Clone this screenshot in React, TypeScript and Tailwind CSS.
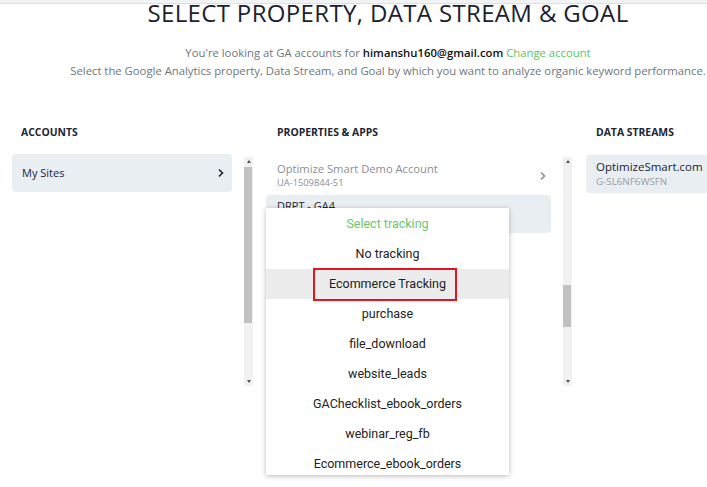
import React from "react";

const head = { fontFamily: '"Open Sans", "Liberation Sans", sans-serif' };
const rob = { fontFamily: 'Roboto, "Liberation Sans", sans-serif' };

function Chevron() {
  return (
    <svg width="8" height="10" viewBox="0 0 8 10" fill="none">
      <path d="M2 1.5 L5.5 5 L2 8.5" stroke="currentColor" strokeWidth="1.6" />
    </svg>
  );
}

function Scrollbar({ thumbTop, thumbH }: { thumbTop: number; thumbH: number }) {
  return (
    <div className="relative w-[9px] h-[229px] bg-[#f1f1f1] flex flex-col items-center">
      <div className="h-[9px] flex items-center justify-center">
        <div className="w-0 h-0 border-x-[2.5px] border-x-transparent border-b-[3px] border-b-[#505050]" />
      </div>
      <div className="absolute left-0 w-[8px] bg-[#c1c1c1]" style={{ top: thumbTop, height: thumbH }} />
      <div className="mt-auto h-[9px] flex items-center justify-center">
        <div className="w-0 h-0 border-x-[2.5px] border-x-transparent border-t-[3px] border-t-[#505050]" />
      </div>
    </div>
  );
}

const items = [
  "No tracking",
  "Ecommerce Tracking",
  "purchase",
  "file_download",
  "website_leads",
  "GAChecklist_ebook_orders",
  "webinar_reg_fb",
  "Ecommerce_ebook_orders",
];

export default function App() {
  return (
    <div className="w-[707px] h-[487px] overflow-hidden bg-white relative text-[#1c2533]" style={head}>
      <div className="h-[4px] bg-[#f2f3f5] border-b border-[#dcdfe3]" />
      <div className="w-[776px]">
        <h1 className="text-center text-[24px] leading-[22px] -mt-[2px] font-medium tracking-[0.35px] text-[#1a2230]">
          SELECT PROPERTY, DATA STREAM &amp; GOAL
        </h1>
        <p className="text-center text-[11.3px] text-[#6f767e] mt-[20px] leading-[18px]">
          You're looking at GA accounts for{" "}
          <span className="text-[#111] font-semibold">himanshu160@gmail.com</span>{" "}
          <span className="text-[#5cc45a]">Change account</span>
        </p>
        <p className="text-center text-[11.3px] text-[#6f767e] leading-[18px] whitespace-nowrap">
          Select the Google Analytics property, Data Stream, and Goal by which you want to analyze organic keyword performance.
        </p>
      </div>

      <div className="flex mt-[44px]">
        {/* Accounts */}
        <div className="w-[266px] shrink-0 flex">
          <div className="w-[232px] pl-[12px]">
            <div className="pl-[9px] text-[10.4px] font-bold h-[16px] leading-[16px]">ACCOUNTS</div>
            <div className="mt-[14px] h-[38px] rounded-[4px] bg-[#e8eef1] flex items-center justify-between pl-[10px] pr-[7px] text-[11px]">
              <span>My Sites</span>
              <Chevron />
            </div>
          </div>
          <div className="ml-[12px] mt-[33px]">
            <Scrollbar thumbTop={10} thumbH={156} />
          </div>
        </div>

        {/* Properties */}
        <div className="w-[320px] shrink-0 flex relative">
          <div className="w-[285px]">
            <div className="pl-[11px] text-[10.4px] font-bold h-[16px] leading-[16px]">PROPERTIES &amp; APPS</div>
            <div className="mt-[19px] pl-[11px] pr-[4px] h-[34px] flex items-center justify-between text-[#8a8f95]">
              <div>
                <div className="text-[11.2px] leading-[14px]">Optimize Smart Demo Account</div>
                <div className="text-[9.3px] leading-[14px]">UA-1509844-51</div>
              </div>
              <Chevron />
            </div>
            <div className="mt-[2px] h-[38px] rounded-[4px] bg-[#e8eef1] pl-[11px] pt-[3px] text-[11px]">DRPT - GA4</div>
          </div>
          <div className="ml-[12px] mt-[33px]">
            <Scrollbar thumbTop={128} thumbH={42} />
          </div>

          {/* Dropdown */}
          <div
            className="absolute left-0 top-[84px] w-[243px] h-[267px] bg-white shadow-[0_1px_5px_rgba(0,0,0,0.28)] z-10 pt-[1px]"
            style={rob}
          >
            <div className="h-[30px] flex items-center justify-center text-[12.5px] text-[#6cc76b]">Select tracking</div>
            {items.map((t, i) => (
              <div
                key={t}
                className={
                  "h-[30px] flex items-center justify-center text-[12.5px] text-[#222] relative " +
                  (i === 1 ? "bg-[#ececec]" : "")
                }
              >
                {t}
                {i === 1 && (
                  <div className="absolute left-[47px] top-[-1px] w-[144px] h-[33px] border-2 border-[#e1141f]" />
                )}
              </div>
            ))}
          </div>
        </div>

        {/* Data streams */}
        <div className="flex-1">
          <div className="pl-[10px] text-[10.4px] font-bold h-[16px] leading-[16px]">DATA STREAMS</div>
          <div className="mt-[15px] h-[38px] rounded-l-[4px] bg-[#e8eef1] pl-[10px] pt-[5px]">
            <div className="text-[11.5px] leading-[14px]">OptimizeSmart.com</div>
            <div className="text-[9.8px] leading-[15px] text-[#9aa0a6]">G-SL6NF6WSFN</div>
          </div>
        </div>
      </div>
    </div>
  );
}
